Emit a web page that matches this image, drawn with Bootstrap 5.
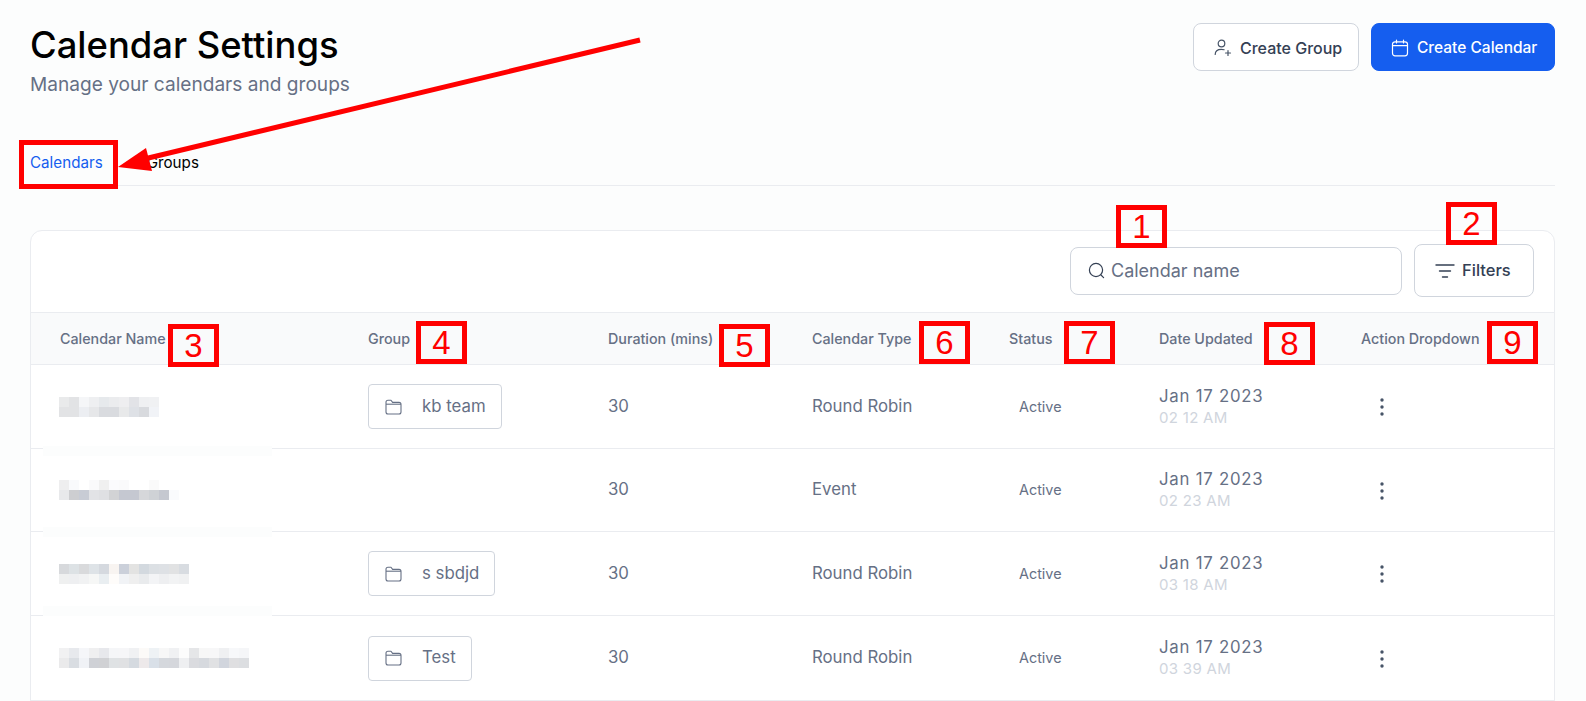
<!DOCTYPE html>
<html lang="en">
<head>
  <meta charset="UTF-8" />
  <meta name="viewport" content="width=device-width, initial-scale=1.0"/>
  <title>Calendar Settings</title>

  <!-- Bootstrap 5 CSS -->
  <link href="https://cdn.jsdelivr.net/npm/bootstrap@5.3.3/dist/css/bootstrap.min.css" rel="stylesheet">

  <style>
    html, body {
      height: 701px;
      overflow: hidden;
    }

    body {
      position: relative;
      font-family: Inter, "Liberation Sans", sans-serif;
      background: #fcfdfd;
      color: #667085;
    }

    .page-wrap {
      padding: 23px 31px 0 30px;
    }

    .page-title {
      font-size: 36.4px;
      font-weight: 500;
      line-height: 44px;
      color: #000;
      margin: 0;
    }

    .page-sub {
      font-size: 19.1px;
      line-height: 26px;
      color: #667085;
      margin: 4px 0 0;
    }

    .head-btn {
      height: 48px;
      font-size: 16px;
      font-weight: 500;
      border-radius: 8px;
      display: inline-flex;
      align-items: center;
      gap: 8px;
    }

    .btn-group-new {
      width: 166px;
      padding: 2px 0 0 20px;
      background: #fff;
      border: 1px solid #d0d5dd;
      color: #344054;
    }

    .btn-cal-new {
      width: 184px;
      padding: 2px 0 0 19px;
      background: #155eef;
      border: 1px solid #155eef;
      color: #fff;
      font-size: 15.5px;
    }

    .tab-bar {
      margin-top: 41px;
      height: 48px;
      border-bottom: 1px solid #eaecf0;
      gap: 44px;
      font-size: 15.2px;
      padding-top: 3px;
    }

    .tab-on { color: #155eef; }
    .tab-off { color: #000; }

    .cal-card {
      margin-top: 44px;
      background: #fff;
      border: 1px solid #eaecf0;
      border-radius: 12px 12px 0 0;
    }

    .cal-tools {
      height: 81px;
      padding-right: 20px;
      padding-bottom: 2px;
      gap: 12px;
    }

    .cal-search {
      width: 332px;
      height: 48px;
      padding-left: 17px;
      gap: 6px;
      border: 1px solid #d0d5dd;
      border-radius: 8px;
      background: #fff;
    }

    .cal-search input {
      border: 0;
      outline: 0;
      padding: 0;
      flex: 1;
      font-size: 18px;
      color: #667085;
      background: transparent;
    }

    .cal-search input::placeholder { color: #667085; opacity: 1; }

    .btn-filters {
      width: 120px;
      height: 53px;
      padding: 0 0 0 20px;
      font-size: 16.5px;
      font-weight: 500;
      color: #344054;
      background: #fff;
      border: 1px solid #d0d5dd;
      border-radius: 8px;
      display: inline-flex;
      align-items: center;
      gap: 7px;
    }

    .cal-table {
      table-layout: fixed;
      margin: 0;
      width: 100%;
    }

    .cal-table th {
      height: 52px;
      padding: 0;
      font-size: 14.3px;
      font-weight: 500;
      color: #667085;
      background: #f9fafb;
      vertical-align: middle;
      border-top: 1px solid #eaecf0;
      border-bottom: 1px solid #eaecf0;
      white-space: nowrap;
    }

    .cal-table td {
      height: 84px;
      padding: 0;
      font-size: 16.8px;
      color: #667085;
      vertical-align: middle;
      border-bottom: 1px solid #eaecf0;
    }

    .cal-table tr:nth-child(2) td { height: 83px; }
    .cal-table tr:nth-child(4) td { height: 85px; }

    .w-name { width: 337px; }
    .w-group { width: 240px; }
    .w-dur { width: 204px; }
    .w-type { width: 197px; }
    .w-status { width: 150px; }
    .w-date { width: 202px; }

    .cal-table .first-cell { padding-left: 29px; }

    .group-chip {
      height: 45px;
      padding: 0 15px 0 16px;
      gap: 20px;
      border: 1px solid #d0d5dd;
      border-radius: 4px;
      background: #fff;
      font-size: 16.8px;
    }

    .status-txt {
      font-size: 14.4px;
      padding-left: 10px;
    }

    .date-main {
      line-height: 22px;
      letter-spacing: .75px;
    }

    .date-time {
      font-size: 15px;
      line-height: 22px;
      color: #d0d5dd;
      letter-spacing: .3px;
    }

    .row-dots { margin-left: 19px; }

    .mosaic {
      display: block;
      margin-left: -1px;
    }

    /* annotations and retouching over the screenshot */
    .blur-band {
      position: absolute;
      left: 43px;
      width: 229px;
      height: 10px;
      background: #fcfdfd;
    }

    .b1 { top: 446px; }
    .b2 { top: 527px; }
    .b3 { top: 606px; }

    .mark-box {
      position: absolute;
      border: 5px solid #f00;
      color: #f00;
      width: 51px;
      height: 43px;
      display: flex;
      align-items: center;
      justify-content: center;
      font-family: "Liberation Sans", sans-serif;
      font-size: 33px;
      line-height: 1;
    }

    .mark-tab {
      position: absolute;
      left: 19px;
      top: 140px;
      width: 99px;
      height: 49px;
      border: 5px solid #f00;
    }

    .mark-arrow {
      position: absolute;
      left: 0;
      top: 0;
    }

    .m1 { left: 1116px; top: 205px; }
    .m2 { left: 1446px; top: 202px; }
    .m3 { left: 168px; top: 324px; }
    .m4 { left: 416px; top: 321px; }
    .m5 { left: 719px; top: 324px; }
    .m6 { left: 919px; top: 321px; }
    .m7 { left: 1064px; top: 321px; }
    .m8 { left: 1264px; top: 322px; }
    .m9 { left: 1487px; top: 321px; }
  </style>
</head>
<body>

  <div class="page-wrap">
    <div class="d-flex justify-content-between align-items-start">
      <div>
        <h1 class="page-title">Calendar Settings</h1>
        <p class="page-sub">Manage your calendars and groups</p>
      </div>
      <div class="d-flex gap-2">
        <button class="btn head-btn btn-group-new">
          <svg width="18" height="18" viewBox="0 0 18 18" fill="none" stroke="#475467" stroke-width="1.2" stroke-linecap="round"><circle cx="7.5" cy="4.5" r="3.3"/><path d="M1.2 15.5c0-3.2 2.4-5.2 6.2-5.2 1 0 1.9.1 2.7.4M14 11.5v5M11.5 14h5"/></svg>
          Create Group
        </button>
        <button class="btn head-btn btn-cal-new ms-1">
          <svg width="18" height="18" viewBox="0 0 18 18" fill="none" stroke="#fff" stroke-width="1.2" stroke-linecap="round"><rect x="1.5" y="2.8" width="15" height="14" rx="2.5"/><path d="M1.5 6.6h15M5.5 1v3M12.5 1v3"/></svg>
          Create Calendar
        </button>
      </div>
    </div>

    <div class="tab-bar d-flex align-items-center">
      <span class="tab-on">Calendars</span>
      <span class="tab-off">Groups</span>
    </div>

    <div class="cal-card">
      <div class="cal-tools d-flex justify-content-end align-items-center">
        <label class="cal-search d-flex align-items-center mb-0">
          <svg width="17" height="17" viewBox="0 0 17 17" fill="none" stroke="#344054" stroke-width="1.2" stroke-linecap="round"><circle cx="8" cy="8" r="6.6"/><path d="M13 13l2.6 2.6"/></svg>
          <input type="text" placeholder="Calendar name">
        </label>
        <button class="btn-filters">
          <svg width="20" height="16" viewBox="0 0 20 16" fill="none" stroke="#344054" stroke-width="1.4" stroke-linecap="round"><path d="M1 2h18M4.5 8h11M7.5 14h5"/></svg>
          Filters
        </button>
      </div>

      <table class="table cal-table">
        <thead>
          <tr>
            <th class="w-name first-cell">Calendar Name</th>
            <th class="w-group">Group</th>
            <th class="w-dur">Duration (mins)</th>
            <th class="w-type">Calendar Type</th>
            <th class="w-status">Status</th>
            <th class="w-date">Date Updated</th>
            <th>Action Dropdown</th>
          </tr>
        </thead>
        <tbody>
          <tr>
            <td class="first-cell"><svg class="mosaic" width="100" height="20"></svg></td>
            <td>
              <span class="group-chip d-inline-flex align-items-center">
                <svg width="17" height="16" viewBox="0 0 17 16" fill="none" stroke="#667085" stroke-width="1.1" stroke-linejoin="round"><path d="M1 3.2C1 2 1.8 1.2 3 1.2h3l1.6 2.2H14c1.2 0 2 .8 2 2v7.6c0 1.2-.8 2-2 2H3c-1.2 0-2-.8-2-2z"/><path d="M1 5.2h15"/></svg>
                kb team
              </span>
            </td>
            <td>30</td>
            <td>Round Robin</td>
            <td><span class="status-txt">Active</span></td>
            <td>
              <div class="date-main">Jan 17 2023</div>
              <div class="date-time">02 12 AM</div>
            </td>
            <td>
              <svg class="row-dots" width="4" height="18" viewBox="0 0 4 18" fill="#475467"><circle cx="2" cy="2" r="1.7"/><circle cx="2" cy="9" r="1.7"/><circle cx="2" cy="16" r="1.7"/></svg>
            </td>
          </tr>
          <tr>
            <td class="first-cell"><svg class="mosaic" width="120" height="20"></svg></td>
            <td></td>
            <td>30</td>
            <td>Event</td>
            <td><span class="status-txt">Active</span></td>
            <td>
              <div class="date-main">Jan 17 2023</div>
              <div class="date-time">02 23 AM</div>
            </td>
            <td>
              <svg class="row-dots" width="4" height="18" viewBox="0 0 4 18" fill="#475467"><circle cx="2" cy="2" r="1.7"/><circle cx="2" cy="9" r="1.7"/><circle cx="2" cy="16" r="1.7"/></svg>
            </td>
          </tr>
          <tr>
            <td class="first-cell"><svg class="mosaic" width="130" height="20"></svg></td>
            <td>
              <span class="group-chip d-inline-flex align-items-center">
                <svg width="17" height="16" viewBox="0 0 17 16" fill="none" stroke="#667085" stroke-width="1.1" stroke-linejoin="round"><path d="M1 3.2C1 2 1.8 1.2 3 1.2h3l1.6 2.2H14c1.2 0 2 .8 2 2v7.6c0 1.2-.8 2-2 2H3c-1.2 0-2-.8-2-2z"/><path d="M1 5.2h15"/></svg>
                s sbdjd
              </span>
            </td>
            <td>30</td>
            <td>Round Robin</td>
            <td><span class="status-txt">Active</span></td>
            <td>
              <div class="date-main">Jan 17 2023</div>
              <div class="date-time">03 18 AM</div>
            </td>
            <td>
              <svg class="row-dots" width="4" height="18" viewBox="0 0 4 18" fill="#475467"><circle cx="2" cy="2" r="1.7"/><circle cx="2" cy="9" r="1.7"/><circle cx="2" cy="16" r="1.7"/></svg>
            </td>
          </tr>
          <tr>
            <td class="first-cell"><svg class="mosaic" width="190" height="20"></svg></td>
            <td>
              <span class="group-chip d-inline-flex align-items-center">
                <svg width="17" height="16" viewBox="0 0 17 16" fill="none" stroke="#667085" stroke-width="1.1" stroke-linejoin="round"><path d="M1 3.2C1 2 1.8 1.2 3 1.2h3l1.6 2.2H14c1.2 0 2 .8 2 2v7.6c0 1.2-.8 2-2 2H3c-1.2 0-2-.8-2-2z"/><path d="M1 5.2h15"/></svg>
                Test
              </span>
            </td>
            <td>30</td>
            <td>Round Robin</td>
            <td><span class="status-txt">Active</span></td>
            <td>
              <div class="date-main">Jan 17 2023</div>
              <div class="date-time">03 39 AM</div>
            </td>
            <td>
              <svg class="row-dots" width="4" height="18" viewBox="0 0 4 18" fill="#475467"><circle cx="2" cy="2" r="1.7"/><circle cx="2" cy="9" r="1.7"/><circle cx="2" cy="16" r="1.7"/></svg>
            </td>
          </tr>
        </tbody>
      </table>
    </div>
  </div>

  <!-- annotations -->
  <div class="blur-band b1"></div>
  <div class="blur-band b2"></div>
  <div class="blur-band b3"></div>
  <div class="mark-tab"></div>
  <svg class="mark-arrow" width="700" height="200" viewBox="0 0 700 200">
    <line x1="640" y1="40" x2="140" y2="160" stroke="#f00" stroke-width="5"/>
    <polygon points="118,167 146,148 152,171" fill="#f00"/>
  </svg>
  <div class="mark-box m1">1</div>
  <div class="mark-box m2">2</div>
  <div class="mark-box m3">3</div>
  <div class="mark-box m4">4</div>
  <div class="mark-box m5">5</div>
  <div class="mark-box m6">6</div>
  <div class="mark-box m7">7</div>
  <div class="mark-box m8">8</div>
  <div class="mark-box m9">9</div>

  <!-- Bootstrap JS -->
  <script src="https://cdn.jsdelivr.net/npm/bootstrap@5.3.3/dist/js/bootstrap.bundle.min.js"></script>

  <script>
  // pixelated names: two lines of 10px blocks per row
  const blocks = [
    ["e9eaeb e2e3e5 f5f6f8 eeeff1 e6e9ec ebecee eeeef0 e2e3e7 eff0f2 f0f1f3",
     "e2e3e5 e2e3e5 eceef2 e6e7e9 d9dbdf d9dbdf e8e9ea dee1e6 d8dade f1f3f7"],
    ["eeeeef f9fafc ffffff fafafb f0f0f0 fbfbfd fafafb ffffff ffffff fafafa ffffff ffffff",
     "e8e9eb cdced1 c8ccd5 e2e3e6 dfe0e3 d2d3d5 c5c8d1 c5c8d1 d6d7da cfd2d6 c5c8d0 fafbfd"],
    ["d7d9dc dde2e5 d9dadc dee3e7 d5d9df f8f4f1 cbd0da e3e3e2 d3d9df dce0e4 dee1e5 e1e2e3 d8dce1",
     "eff0f0 eeeff1 f1f2f3 f6f7f6 e9eef1 fefcfa f1f3f6 efefef e9ebed f3f4f6 eeeff1 f2f3f4 f0f1f2"],
    ["f1f1f2 e7e9ed f5f6f9 efeff0 e7e8ec f5f6f8 f6f6f8 f0f1f3 fcfaf8 eef2f5 f7f7f7 f0f1f3 fcfcfc e5e6e8 f7f7f7 f7f7f8 eff0f2 f7f8fa f5f6f8",
     "eaeaeb d9dde2 f0f2f6 cfd1d6 d0d1d4 dfe2e4 e0e1e3 d5dae0 ede9ea d9e0e8 d5d8dd d5d7dc eeeff1 dadbdf d6d9de e0e1e3 d1d5dd dfdfe1 dcdee1"]
  ];

  document.querySelectorAll(".mosaic").forEach(function (svg, n) {
    let html = "";
    blocks[n].forEach(function (line, y) {
      line.split(" ").forEach(function (c, x) {
        html += `<rect x="${x * 10}" y="${y * 10}" width="10" height="10" fill="#${c}"/>`;
      });
    });
    svg.innerHTML = html;
  });
  </script>
</body>
</html>
